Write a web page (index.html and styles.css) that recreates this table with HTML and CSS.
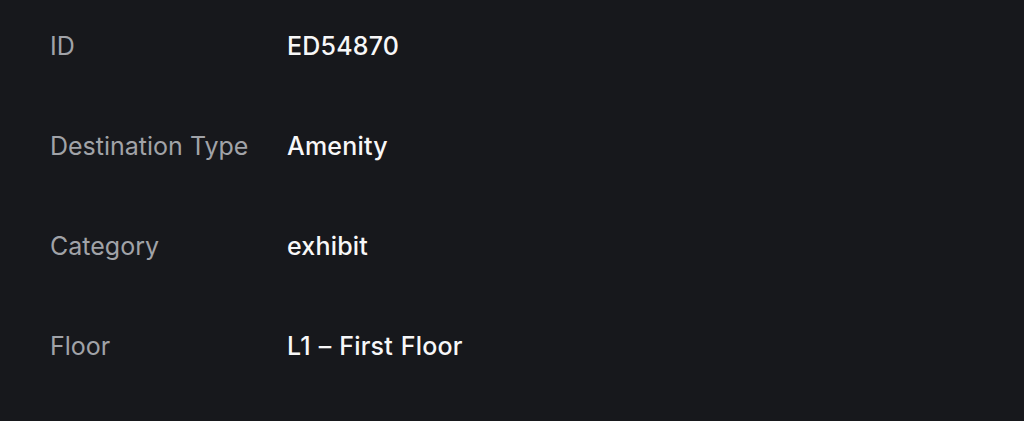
FILE: index.html
```html
<!DOCTYPE html>
<html>
<head>
<meta charset="utf-8">
<link rel="stylesheet" href="styles.css">
</head>
<body>
<dl class="details">
  <div class="row"><dt class="label">ID</dt><dd class="value">ED54870</dd></div>
  <div class="row"><dt class="label">Destination Type</dt><dd class="value">Amenity</dd></div>
  <div class="row"><dt class="label">Category</dt><dd class="value">exhibit</dd></div>
  <div class="row"><dt class="label">Floor</dt><dd class="value">L1 – First Floor</dd></div>
</dl>
</body>
</html>
```
FILE: styles.css
```css
html, body {
  margin: 0;
  padding: 0;
  background: #17181c;
  height: 100%;
}
body {
  font-family: Inter, "Noto Sans", sans-serif;
  font-size: 25px;
  line-height: 30px;
  overflow: hidden;
}
.details {
  margin: 0;
  padding: 0 0 0 50px;
  display: flex;
  flex-direction: column;
}
.row {
  display: flex;
  height: 100px;
  align-items: flex-start;
  padding-top: 31px;
  box-sizing: border-box;
}
.label {
  width: 237px;
  color: #a1a3a8;
  margin: 0;
}
.value {
  margin: 0;
  color: #f7f7f8;
  font-weight: 500;
  letter-spacing: 0.2px;
  word-spacing: 1px;
}
```
